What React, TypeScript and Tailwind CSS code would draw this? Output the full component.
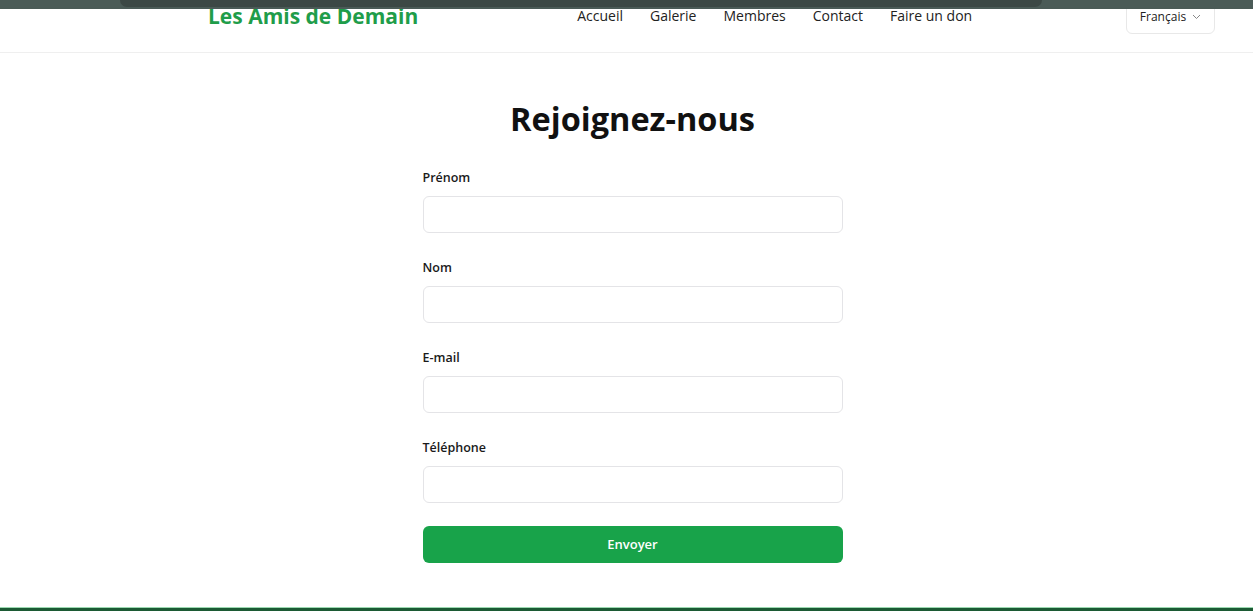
import React from "react";

const font = { fontFamily: '"Open Sans", "Noto Sans", sans-serif' };

function Field({ label }: { label: string }) {
  return (
    <div className="flex flex-col">
      <label className="text-[12.5px] leading-5 font-semibold text-[#1a1a1a]">{label}</label>
      <input className="mt-2 h-[37px] w-full rounded-md border border-[#e4e4e7] bg-white px-3 text-sm outline-none" />
    </div>
  );
}

export default function App() {
  return (
    <div style={font} className="relative flex h-[611px] flex-col overflow-hidden bg-white">
      <div className="absolute left-0 right-0 top-0 z-10 h-[9px] bg-[#4b5b57]">
        <div className="ml-[120px] h-[7px] w-[922px] rounded-b-lg bg-[#3c4845]" />
      </div>
      <header className="flex h-[53px] items-start border-b border-[#efefef]">
        <div className="ml-[208px] mt-[2px] text-[21px] font-bold leading-7 text-[#1f9d4a]">Les Amis de Demain</div>
        <nav className="ml-[159px] mt-[6px] flex gap-[27px] text-[14px] leading-5 text-[#222]">
          <a>Accueil</a>
          <a>Galerie</a>
          <a>Membres</a>
          <a>Contact</a>
          <a>Faire un don</a>
        </nav>
        <button className="ml-auto mr-[38px] -mt-[6px] flex h-[40px] w-[89px] items-center justify-center gap-[6px] rounded-md border border-[#e8e8e8] pt-[6px] text-[12px] text-[#222]">
          Français
          <svg width="9" height="6" viewBox="0 0 9 6" fill="none" stroke="#888" strokeWidth="1">
            <path d="M1 1l3.5 3.5L8 1" />
          </svg>
        </button>
      </header>
      <main className="flex flex-1 justify-center pl-[12px]">
        <div className="w-[420px]">
          <h1 className="mt-[46px] text-center text-[32.5px] font-bold leading-10 text-[#111]">Rejoignez-nous</h1>
          <div className="mt-[29px] flex flex-col gap-[25px]">
            <Field label="Prénom" />
            <Field label="Nom" />
            <Field label="E-mail" />
            <Field label="Téléphone" />
          </div>
          <button className="mt-[23px] h-[37px] w-full rounded-md bg-[#18a34a] text-[13px] font-semibold text-white">
            Envoyer
          </button>
        </div>
      </main>
      <footer className="h-[4px] border-t border-[#9ad9b0] bg-[#1c5a34]" />
    </div>
  );
}
